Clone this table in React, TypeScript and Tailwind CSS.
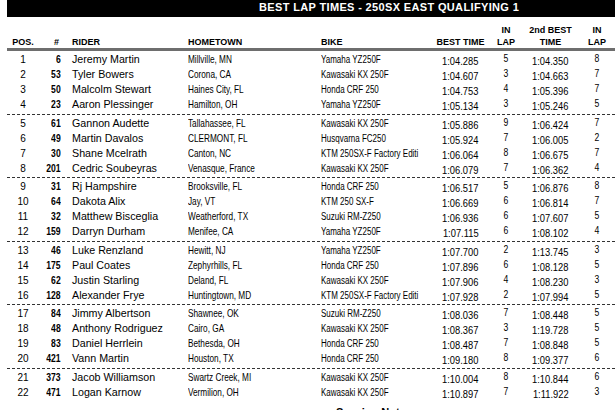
type Row = [number, number, string, string, string, string, number, string, number]

const rows: Row[] = [
  [1, 6, 'Jeremy Martin', 'Millville, MN', 'Yamaha YZ250F', '1:04.285', 5, '1:04.350', 8],
  [2, 53, 'Tyler Bowers', 'Corona, CA', 'Kawasaki KX 250F', '1:04.607', 3, '1:04.663', 7],
  [3, 50, 'Malcolm Stewart', 'Haines City, FL', 'Honda CRF 250', '1:04.753', 4, '1:05.396', 7],
  [4, 23, 'Aaron Plessinger', 'Hamilton, OH', 'Yamaha YZ250F', '1:05.134', 3, '1:05.246', 5],
  [5, 61, 'Gannon Audette', 'Tallahassee, FL', 'Kawasaki KX 250F', '1:05.886', 9, '1:06.424', 7],
  [6, 49, 'Martin Davalos', 'CLERMONT, FL', 'Husqvarna FC250', '1:05.924', 7, '1:06.005', 2],
  [7, 30, 'Shane Mcelrath', 'Canton, NC', 'KTM 250SX-F Factory Editi', '1:06.064', 8, '1:06.675', 7],
  [8, 201, 'Cedric Soubeyras', 'Venasque, France', 'Kawasaki KX 250F', '1:06.079', 7, '1:06.362', 4],
  [9, 31, 'Rj Hampshire', 'Brooksville, FL', 'Honda CRF 250', '1:06.517', 5, '1:06.876', 8],
  [10, 64, 'Dakota Alix', 'Jay, VT', 'KTM 250 SX-F', '1:06.669', 6, '1:06.814', 7],
  [11, 32, 'Matthew Bisceglia', 'Weatherford, TX', 'Suzuki RM-Z250', '1:06.936', 6, '1:07.607', 5],
  [12, 159, 'Darryn Durham', 'Menifee, CA', 'Yamaha YZ250F', '1:07.115', 6, '1:08.102', 4],
  [13, 46, 'Luke Renzland', 'Hewitt, NJ', 'Yamaha YZ250F', '1:07.700', 2, '1:13.745', 3],
  [14, 175, 'Paul Coates', 'Zephyrhills, FL', 'Honda CRF 250', '1:07.896', 6, '1:08.128', 5],
  [15, 62, 'Justin Starling', 'Deland, FL', 'Kawasaki KX 250F', '1:07.906', 4, '1:08.230', 3],
  [16, 128, 'Alexander Frye', 'Huntingtown, MD', 'KTM 250SX-F Factory Editi', '1:07.928', 2, '1:07.994', 5],
  [17, 84, 'Jimmy Albertson', 'Shawnee, OK', 'Suzuki RM-Z250', '1:08.036', 7, '1:08.448', 5],
  [18, 48, 'Anthony Rodriguez', 'Cairo, GA', 'Kawasaki KX 250F', '1:08.367', 3, '1:19.728', 5],
  [19, 83, 'Daniel Herrlein', 'Bethesda, OH', 'Honda CRF 250', '1:08.487', 7, '1:08.848', 5],
  [20, 421, 'Vann Martin', 'Houston, TX', 'Honda CRF 250', '1:09.180', 8, '1:09.377', 6],
  [21, 373, 'Jacob Williamson', 'Swartz Creek, MI', 'Kawasaki KX 250F', '1:10.004', 8, '1:10.844', 6],
  [22, 471, 'Logan Karnow', 'Vermilion, OH', 'Kawasaki KX 250F', '1:10.897', 7, '1:11.922', 3],
]

const COLS = 'grid grid-cols-[32px_33px_116px_133px_106px_67px_24px_65px_28px]'

// gaps between the groups of four riders alternate a little in the pdf
const sepHeights = ['h-[4px]', 'h-[3px]', 'h-[4px]', 'h-[3px]', 'h-[4px]']

// the pdf uses Arial Narrow for most columns, squeeze Liberation Sans instead
function LapRow({ row }: { row: Row }) {
  const [pos, num, rider, town, bike, best, lap, second, lap2] = row
  return (
    <div className={`${COLS} h-[15px] text-black`}>
      <div className="text-center text-[10px] leading-[15px]">{pos}</div>
      <div className="pr-[11px] text-right text-[10.5px] font-bold leading-[15px]">
        <span className="inline-block origin-right scale-x-[0.82]">{num}</span>
      </div>
      <div className="whitespace-nowrap text-[10.7px] leading-[15px]">{rider}</div>
      <div className="whitespace-nowrap pt-px text-[10.3px] leading-[14px]">
        <span className="inline-block origin-left scale-x-[0.8]">{town}</span>
      </div>
      <div className="overflow-hidden whitespace-nowrap text-[10px] leading-[15px]">
        <span className="inline-block origin-left scale-x-[0.8]">{bike}</span>
      </div>
      <div className="pt-[2px] text-center text-[11.4px] leading-[14px]">
        <span className="inline-block scale-x-[0.82]">{best}</span>
      </div>
      <div className="text-center text-[10.5px] leading-[13px]">
        <span className="inline-block scale-x-[0.82]">{lap}</span>
      </div>
      <div className="pt-[2px] text-center text-[11.4px] leading-[14px]">
        <span className="inline-block scale-x-[0.82]">{second}</span>
      </div>
      <div className="text-center text-[10.5px] leading-[13px]">
        <span className="inline-block scale-x-[0.82]">{lap2}</span>
      </div>
    </div>
  )
}

export default function App() {
  const groups = [0, 4, 8, 12, 16, 20].map((i) => rows.slice(i, i + 4))

  return (
    <div className="h-[410px] w-[615px] overflow-hidden bg-white font-['Liberation_Sans',Arial,sans-serif] text-black">
      {/* Title bar */}
      <div className="ml-[7px] h-[17px] bg-black pl-[252px] text-[11px] font-bold leading-[14px] tracking-[0.35px] whitespace-nowrap text-white">
        BEST LAP TIMES - 250SX EAST QUALIFYING 1
      </div>

      <div className="ml-[7px] w-[608px]">
        {/* Column headings */}
        <div className={`${COLS} h-[31px] items-end text-[9px] font-bold leading-[12px]`}>
          <div className="text-center">POS.</div>
          <div className="pr-[13px] text-right">#</div>
          <div>RIDER</div>
          <div>HOMETOWN</div>
          <div>BIKE</div>
          <div className="text-center whitespace-nowrap">BEST TIME</div>
          <div className="text-center">
            IN
            <br />
            LAP
          </div>
          <div className="text-center whitespace-nowrap">
            2nd BEST
            <br />
            TIME
          </div>
          <div className="text-center">
            IN
            <br />
            LAP
          </div>
        </div>
        <div className="h-[3px] bg-[#6e6e6e]" />

        <div className="pt-px">
          {groups.map((group, gi) => (
            <div key={gi}>
              {group.map((row) => (
                <LapRow key={row[0]} row={row} />
              ))}
              {gi < sepHeights.length && (
                <div className={`${sepHeights[gi]} flex items-center`}>
                  <div className="h-px w-full bg-[image:repeating-linear-gradient(90deg,#333_0_3px,transparent_3px_5px)]" />
                </div>
              )}
            </div>
          ))}
        </div>

        <div className="mt-[5px] pl-[329px] text-[11px] font-bold leading-[15px]">Session Notes</div>
      </div>
    </div>
  )
}
